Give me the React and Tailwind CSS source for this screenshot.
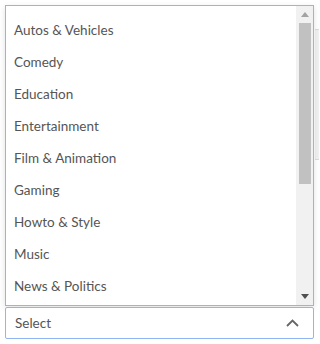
import React from "react";

const items = [
  "Autos & Vehicles",
  "Comedy",
  "Education",
  "Entertainment",
  "Film & Animation",
  "Gaming",
  "Howto & Style",
  "Music",
  "News & Politics",
];

export default function App() {
  return (
    <div
      className="relative w-[319px] h-[344px] bg-white overflow-hidden"
      style={{ fontFamily: "Lato, 'Noto Sans', sans-serif" }}
    >
      <div className="absolute left-[315px] top-[29px] w-[10px] h-[131px] bg-[#f1f1f1] border-t border-b border-[#dcdcdc]" />
      <div className="relative flex flex-col pl-[5px] pt-[5px] w-[314px]">
        <div className="flex h-[301px] border border-[#8fb5f2] bg-white shadow-[0_2px_6px_rgba(0,0,0,0.12)]">
          <div className="flex-1 overflow-hidden pt-[8px]">
            {items.map((t) => (
              <div
                key={t}
                className="h-[32px] flex items-center pl-[8px] text-[13.5px] text-[#555555]"
              >
                {t}
              </div>
            ))}
          </div>
          <div className="w-[17px] bg-[#f1f1f1] flex flex-col items-center">
            <div className="h-[17px] flex items-center justify-center">
              <svg width="8" height="5" viewBox="0 0 8 5">
                <path d="M0 5 L4 0 L8 5 Z" fill="#a3a3a3" />
              </svg>
            </div>
            <div className="w-[12px] h-[161px] bg-[#c1c1c1]" />
            <div className="flex-1" />
            <div className="h-[17px] flex items-center justify-center">
              <svg width="8" height="5" viewBox="0 0 8 5">
                <path d="M0 0 L4 5 L8 0 Z" fill="#505050" />
              </svg>
            </div>
          </div>
        </div>
        <div className="mt-[1px] h-[32px] border border-[#8fb5f2] rounded-[2px] flex items-center justify-between pl-[9px] pr-[14px] bg-white">
          <span className="text-[13.5px] text-[#555555]">Select</span>
          <svg width="13" height="8" viewBox="0 0 13 8">
            <path d="M1 7 L6.5 1.5 L12 7" fill="none" stroke="#666666" strokeWidth="1.8" />
          </svg>
        </div>
      </div>
    </div>
  );
}
